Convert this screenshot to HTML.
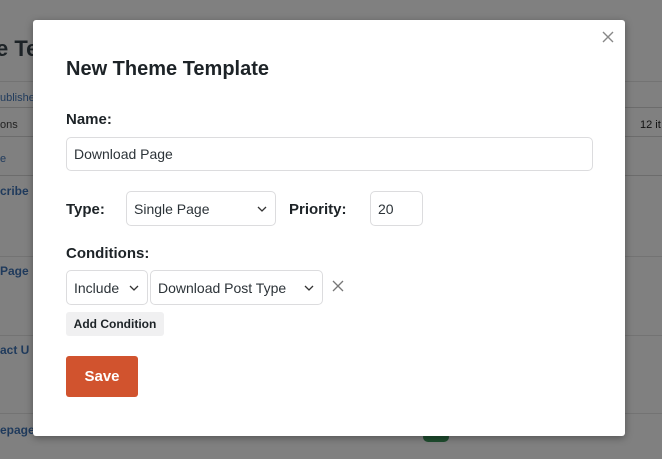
<!DOCTYPE html>
<html><head><style>
body{margin:0;width:662px;height:459px;overflow:hidden;background:#808080;font-family:"Liberation Sans",sans-serif;position:relative}
.a{position:absolute}
.bg{color:#1f3a5c;font-weight:bold;font-size:12px}
.line{position:absolute;left:0;width:662px;height:1px;background:#6c6c6c}
.modal{position:absolute;left:33px;top:20px;width:592px;height:416px;background:#fff;border-radius:3px;box-shadow:0 2px 8px rgba(0,0,0,.35)}
.lbl{position:absolute;font-weight:bold;font-size:15px;color:#1d2327}
.box{position:absolute;border:1px solid #dcdcde;border-radius:5px;background:#fff;font-size:14px;color:#2c3338;box-sizing:border-box;padding-left:7px;display:flex;align-items:center}
.chev{position:absolute;right:8px;top:50%;margin-top:-3px}
</style></head><body>
<div class="a" style="left:-4px;top:36px;font-size:22px;font-weight:bold;color:#1d2327">e Te</div>
<div class="a" style="left:0;top:92px;font-size:11px;color:#1f3a5c">ublishe</div>
<div class="line" style="top:81px;background:#737373"></div>
<div class="line" style="top:107px"></div>
<div class="a" style="left:0;top:119px;font-size:11px;color:#222">ons</div>
<div class="a" style="left:640px;top:119px;font-size:11px;color:#111">12 it</div>
<div class="line" style="top:136px"></div>
<div class="a" style="left:0;top:153px;font-size:11px;color:#1f3a5c">e</div>
<div class="line" style="top:175px"></div>
<div class="a bg" style="left:0;top:184px">cribe</div>
<div class="a" style="left:0;top:256px;width:662px;height:1px;background:#737373"></div>
<div class="a bg" style="left:0;top:264px">Page</div>
<div class="a" style="left:0;top:335px;width:662px;height:1px;background:#737373"></div>
<div class="a bg" style="left:0;top:343px">act U</div>
<div class="a" style="left:0;top:413px;width:662px;height:1px;background:#737373"></div>
<div class="a bg" style="left:0;top:423px">epage</div>
<div class="a" style="left:423px;top:432px;width:26px;height:10px;border-radius:5px;background:#1f4d2f"></div>
<div class="modal">
 <svg class="a" style="left:569px;top:11px" width="12" height="12" viewBox="0 0 12 12"><path d="M1 1L11 11M11 1L1 11" stroke="#888" stroke-width="1.4"/></svg>
 <div class="a" style="left:33px;top:38px;font-size:20px;font-weight:bold;color:#1d2327">New Theme Template</div>
 <div class="lbl" style="left:33px;top:91px">Name:</div>
 <div class="box" style="left:33px;top:117px;width:527px;height:34px">Download Page</div>
 <div class="lbl" style="left:33px;top:181px">Type:</div>
 <div class="box" style="left:93px;top:171px;width:150px;height:35px">Single Page<svg class="chev" width="10" height="6"><path d="M1 1L5 5L9 1" stroke="#333" fill="none" stroke-width="1.3"/></svg></div>
 <div class="lbl" style="left:256px;top:181px">Priority:</div>
 <div class="box" style="left:337px;top:171px;width:53px;height:35px">20</div>
 <div class="lbl" style="left:33px;top:225px">Conditions:</div>
 <div class="box" style="left:33px;top:250px;width:82px;height:35px">Include<svg class="chev" width="10" height="6"><path d="M1 1L5 5L9 1" stroke="#333" fill="none" stroke-width="1.3"/></svg></div>
 <div class="box" style="left:117px;top:250px;width:173px;height:35px">Download Post Type<svg class="chev" width="10" height="6"><path d="M1 1L5 5L9 1" stroke="#333" fill="none" stroke-width="1.3"/></svg></div>
 <svg class="a" style="left:299px;top:260px" width="12" height="12" viewBox="0 0 12 12"><path d="M1 1L11 11M11 1L1 11" stroke="#777" stroke-width="1.3"/></svg>
 <div class="a" style="left:33px;top:292px;width:98px;height:24px;background:#f0f0f1;border-radius:3px;font-size:12px;font-weight:bold;color:#1d2327;display:flex;align-items:center;justify-content:center">Add Condition</div>
 <div class="a" style="left:33px;top:336px;width:72px;height:41px;background:#d1532e;border-radius:3px;font-size:15px;font-weight:bold;color:#fff;display:flex;align-items:center;justify-content:center">Save</div>
</div>
</body></html>
